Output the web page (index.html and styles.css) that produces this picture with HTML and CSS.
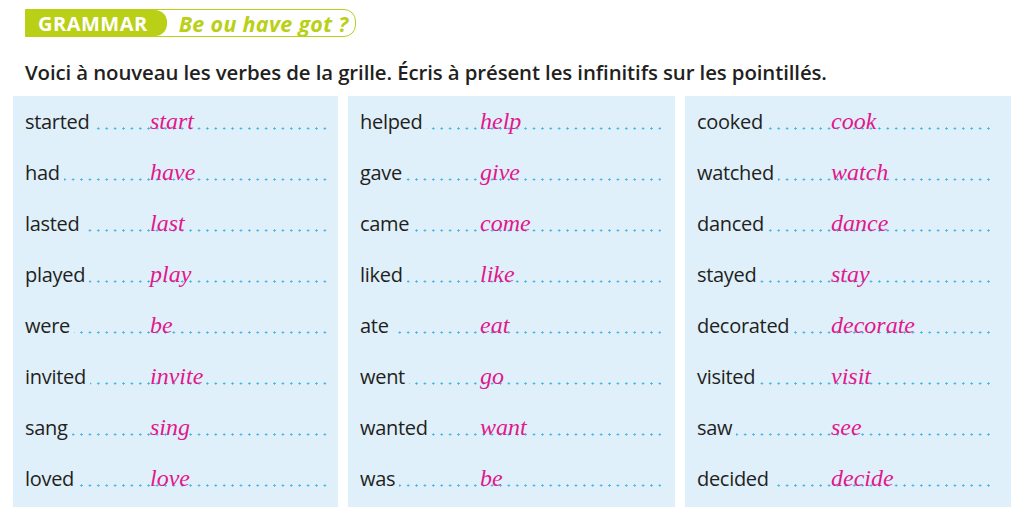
FILE: index.html
```html
<!DOCTYPE html>
<html lang="fr">
<head>
<meta charset="utf-8">
<title>Grammar</title>
<link rel="stylesheet" href="styles.css">
</head>
<body>
<header class="title">
  <span class="tag">GRAMMAR</span>
  <span class="topic">Be ou have got ?</span>
</header>
<p class="instruction">Voici à nouveau les verbes de la grille. Écris à présent les infinitifs sur les pointillés.</p>
<main class="grid">
  <section class="panel p1">
    <div class="row"><span class="word">started</span><span class="answer">start</span></div>
    <div class="row"><span class="word">had</span><span class="answer">have</span></div>
    <div class="row"><span class="word">lasted</span><span class="answer">last</span></div>
    <div class="row"><span class="word">played</span><span class="answer">play</span></div>
    <div class="row"><span class="word">were</span><span class="answer">be</span></div>
    <div class="row"><span class="word">invited</span><span class="answer">invite</span></div>
    <div class="row"><span class="word">sang</span><span class="answer">sing</span></div>
    <div class="row"><span class="word">loved</span><span class="answer">love</span></div>
  </section>
  <section class="panel p2">
    <div class="row"><span class="word">helped</span><span class="answer">help</span></div>
    <div class="row"><span class="word">gave</span><span class="answer">give</span></div>
    <div class="row"><span class="word">came</span><span class="answer">come</span></div>
    <div class="row"><span class="word">liked</span><span class="answer">like</span></div>
    <div class="row"><span class="word">ate</span><span class="answer">eat</span></div>
    <div class="row"><span class="word">went</span><span class="answer">go</span></div>
    <div class="row"><span class="word">wanted</span><span class="answer">want</span></div>
    <div class="row"><span class="word">was</span><span class="answer">be</span></div>
  </section>
  <section class="panel p3">
    <div class="row"><span class="word">cooked</span><span class="answer">cook</span></div>
    <div class="row"><span class="word">watched</span><span class="answer">watch</span></div>
    <div class="row"><span class="word">danced</span><span class="answer">dance</span></div>
    <div class="row"><span class="word">stayed</span><span class="answer">stay</span></div>
    <div class="row"><span class="word">decorated</span><span class="answer">decorate</span></div>
    <div class="row"><span class="word">visited</span><span class="answer">visit</span></div>
    <div class="row"><span class="word">saw</span><span class="answer">see</span></div>
    <div class="row"><span class="word">decided</span><span class="answer">decide</span></div>
  </section>
</main>
</body>
</html>
```

FILE: styles.css
```css
html, body {
  margin: 0;
  padding: 0;
  background: #ffffff;
}
body {
  width: 1024px;
  height: 515px;
  overflow: hidden;
  font-family: "Open Sans", "Noto Sans", sans-serif;
  color: #231f20;
}
.title {
  display: flex;
  align-items: stretch;
  margin: 9px 0 0 25px;
  width: 331px;
  height: 28px;
  box-sizing: border-box;
  border: 1.5px solid #b9d016;
  border-radius: 0 12px 12px 0;
}
.tag {
  display: flex;
  align-items: center;
  background: #b9d016;
  color: #ffffff;
  font-weight: 700;
  font-size: 20px;
  letter-spacing: 0.5px;
  padding: 0 19px 0 12px;
  border-radius: 0 12px 12px 0;
}
.topic {
  display: flex;
  align-items: center;
  padding-left: 12px;
  color: #b9d016;
  font-weight: 700;
  font-style: italic;
  font-size: 21.5px;
  letter-spacing: 0.3px;
}
.instruction {
  margin: 22px 0 0 25px;
  font-size: 20.4px;
  font-weight: 600;
  line-height: 26px;
  letter-spacing: -0.1px;
}
.grid {
  display: grid;
  grid-template-columns: 325px 327px 326px;
  gap: 10px;
  margin: 11px 0 0 13px;
}
.panel {
  background: #dff0fb;
  height: 411px;
  box-sizing: border-box;
  padding: 0 10px 0 12px;
}
.p1 { --col: 125px; }
.p2 { --col: 120px; padding-right: 14px; }
.p3 { --col: 134px; padding-right: 17px; }
.row {
  display: grid;
  grid-template-columns: var(--col) 1fr;
  height: 51px;
  line-height: 51px;
  background-image: radial-gradient(circle at 50% 50%, #3db6e6 0.9px, transparent 1.3px);
  background-size: 8.4px 3px;
  background-repeat: repeat-x;
  background-position: 2px 31px;
}
.word {
  grid-column: 1;
  grid-row: 1;
  justify-self: start;
  font-size: 20px;
  letter-spacing: -0.3px;
  background: #dff0fb;
  padding-right: 4px;
}
.answer {
  grid-column: 2;
  grid-row: 1;
  font-family: "Liberation Serif", "Times New Roman", serif;
  font-style: italic;
  font-size: 24px;
  color: #e2188b;
}
```
